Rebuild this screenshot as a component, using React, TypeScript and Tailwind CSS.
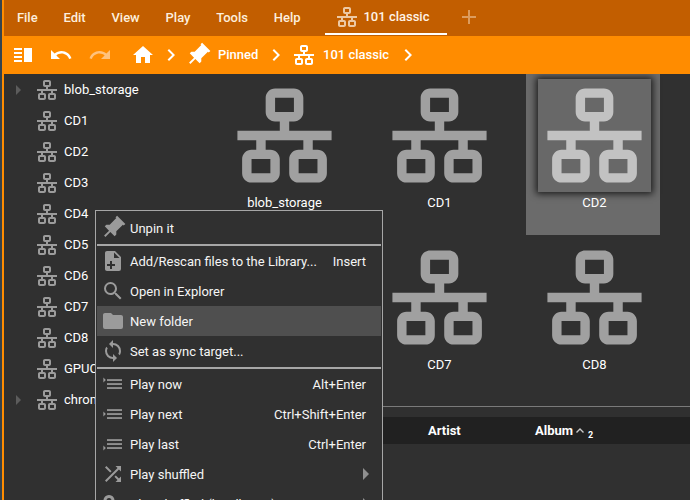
import React from 'react';

const LAN =
  'M10,2C8.89,2 8,2.89 8,4V7C8,8.11 8.89,9 10,9H11V11H2V13H6V15H5C3.89,15 3,15.89 3,17V20C3,21.11 3.89,22 5,22H9C10.11,22 11,21.11 11,20V17C11,15.89 10.11,15 9,15H8V13H16V15H15C13.89,15 13,15.89 13,17V20C13,21.11 13.89,22 15,22H19C20.11,22 21,21.11 21,20V17C21,15.89 20.11,15 19,15H18V13H22V11H13V9H14C15.11,9 16,8.11 16,7V4C16,2.89 15.11,2 14,2H10M10,4H14V7H10V4M5,17H9V20H5V17M15,17H19V20H15V17Z';
const HOME = 'M10,20V14H14V20H19V12H22L12,3L2,12H5V20H10Z';
const UNDO =
  'M12.5,8C9.85,8 7.45,9 5.6,10.6L2,7V16H11L7.38,12.38C8.77,11.22 10.54,10.5 12.5,10.5C16.04,10.5 19.05,12.81 20.1,16L22.47,15.22C21.08,11.03 17.15,8 12.5,8Z';
const REDO =
  'M18.4,10.6C16.55,9 14.15,8 11.5,8C6.85,8 2.92,11.03 1.54,15.22L3.9,16C4.95,12.81 7.95,10.5 11.5,10.5C13.45,10.5 15.23,11.22 16.62,12.38L13,16H22V7L18.4,10.6Z';
const CHEVRON = 'M8.59,16.58L13.17,12L8.59,7.41L10,6L16,12L10,18L8.59,16.58Z';
const PIN = 'M16,12V4H17V2H7V4H8V12L6,14V16H11.2V22H12.8V16H18V14L16,12Z';
const FILE_PLUS =
  'M13,9H18.5L13,3.5V9M6,2H14L20,8V20A2,2 0 0,1 18,22H6C4.89,22 4,21.1 4,20V4C4,2.89 4.89,2 6,2M11,15V12H9V15H6V17H9V20H11V17H14V15H11Z';
const MAGNIFY =
  'M9.5,3A6.5,6.5 0 0,1 16,9.5C16,11.11 15.41,12.59 14.44,13.73L14.71,14H15.5L20.5,19L19,20.5L14,15.5V14.71L13.73,14.44C12.59,15.41 11.11,16 9.5,16A6.5,6.5 0 0,1 3,9.5A6.5,6.5 0 0,1 9.5,3M9.5,5C7,5 5,7 5,9.5C5,12 7,14 9.5,14C12,14 14,12 14,9.5C14,7 12,5 9.5,5Z';
const FOLDER = 'M10,4H4C2.89,4 2,4.89 2,6V18A2,2 0 0,0 4,20H20A2,2 0 0,0 22,18V8C22,6.89 21.1,6 20,6H12L10,4Z';
const SYNC =
  'M12,18A6,6 0 0,1 6,12C6,11 6.25,10.03 6.7,9.2L5.24,7.74C4.46,8.97 4,10.43 4,12A8,8 0 0,0 12,20V23L16,19L12,15M12,4V1L8,5L12,9V6A6,6 0 0,1 18,12C18,13 17.75,13.97 17.3,14.8L18.76,16.26C19.54,15.03 20,13.57 20,12A8,8 0 0,0 12,4Z';
const SHUFFLE =
  'M14.83,13.41L13.42,14.82L16.55,17.95L14.5,20H20V14.5L17.96,16.54L14.83,13.41M14.5,4L16.54,6.04L4,18.59L5.41,20L17.96,7.46L20,9.5V4M10.59,9.17L5.41,4L4,5.41L9.17,10.58L10.59,9.17Z';
const RING = 'M8,3A5.5,5.5 0 1,1 7.99,3ZM8,6A2.5,2.5 0 1,0 8.01,6ZM9,13H11V22H9Z';

const Icon = ({ d, className }: { d: string; className: string }): JSX.Element => (
  <svg viewBox="0 0 24 24" className={`shrink-0 fill-current ${className}`}>
    <path d={d} fillRule="evenodd" />
  </svg>
);

const QueueIcon = ({ markerY }: { markerY: number }): JSX.Element => (
  <svg viewBox="0 0 24 24" className="h-6 w-6 shrink-0 fill-current text-[#9b9b9b]">
    <rect x="6" y="7.2" width="15" height="1.7" />
    <rect x="6" y="11.2" width="15" height="1.7" />
    <rect x="6" y="15.2" width="15" height="1.7" />
    <path d={`M2.4 ${markerY - 2.4}L4.8 ${markerY}L2.4 ${markerY + 2.4}Z`} />
  </svg>
);

const menuBar = ['File', 'Edit', 'View', 'Play', 'Tools', 'Help'];
const tree = ['blob_storage', 'CD1', 'CD2', 'CD3', 'CD4', 'CD5', 'CD6', 'CD7', 'CD8', 'GPUCache', 'chrome'];
const folders = ['blob_storage', 'CD1', 'CD2', 'CD6', 'CD7', 'CD8'];

const Divider = (): JSX.Element => <div className="mt-px h-[2px] bg-[#a6a6a6]" />;

interface MenuRowProps {
  label: string;
  icon: React.ReactNode;
  shortcut?: string;
  active?: boolean;
  submenu?: boolean;
}

const MenuRow = ({ label, icon, shortcut, active, submenu }: MenuRowProps): JSX.Element => (
  <div className={`flex h-[30px] items-center pl-1 pr-[15px] ${active ? 'bg-[#4f4f4f]' : ''}`}>
    {icon}
    <span className="ml-[5px] flex-1 whitespace-nowrap pt-px">{label}</span>
    {shortcut && <span className="whitespace-nowrap pt-px">{shortcut}</span>}
    {submenu && (
      <svg viewBox="0 0 6 12" className="-mr-[3px] h-3 w-[6px] fill-[#8f8f8f]">
        <path d="M0 0L6 6L0 12Z" />
      </svg>
    )}
  </div>
);

const App = (): JSX.Element => {
  const menuIcon = 'h-6 w-6 text-[#9b9b9b]';
  return (
    <div className="relative flex h-[500px] w-[690px] overflow-hidden bg-[#303030] font-['Roboto',sans-serif] text-[13px] text-white">
      <div className="w-1 shrink-0 border-l-2 border-[#34434f] bg-[#ff8c00]" />

      <div className="flex min-w-0 flex-1 flex-col">
        <div className="flex h-9 shrink-0 bg-[#c25e00] font-medium text-[#fdeedd]">
          {menuBar.map((item) => (
            <div key={item} className="flex h-[35px] items-center px-[12.9px]">
              {item}
            </div>
          ))}
          <div className="ml-[12px] flex h-[35px] items-center border-b-2 border-white pl-[10px] pr-[18px] text-[#fff3e6]">
            <Icon d={LAN} className="h-6 w-6 text-[#ecc9a5]" />
            <span className="ml-1">101 classic</span>
          </div>
          <svg viewBox="0 0 14 14" className="ml-[15px] mt-[10px] h-[14px] w-[14px] fill-[#dc9c5e]">
            <path d="M6 0H8V6H14V8H8V14H6V8H0V6H6Z" />
          </svg>
        </div>

        <div className="flex h-[38px] shrink-0 items-center bg-[#ff8c00] pl-[10px] font-medium text-white">
          <svg viewBox="0 0 18 14" className="h-[14px] w-[18px] shrink-0 fill-white">
            <path d="M0 0H8V2H0ZM0 4H8V6H0ZM0 8H8V10H0ZM0 12H8V14H0ZM10 0H18V14H10Z" />
          </svg>
          <Icon d={UNDO} className="ml-[17px] h-6 w-6" />
          <Icon d={REDO} className="ml-[15px] h-6 w-6 text-[#ffc27d]" />
          <Icon d={HOME} className="ml-[19px] h-6 w-6" />
          <Icon d={CHEVRON} className="ml-1 h-6 w-6" />
          <svg viewBox="0 0 24 24" className="ml-px mr-[-2px] h-7 w-7 shrink-0 rotate-45 fill-white">
            <path d={PIN} />
          </svg>
          <span className="ml-2 w-10 whitespace-nowrap">Pinned</span>
          <Icon d={CHEVRON} className="ml-[6px] h-6 w-6" />
          <Icon d={LAN} className="ml-1 h-6 w-6" />
          <span className="ml-[7px] w-[67px] whitespace-nowrap">101 classic</span>
          <Icon d={CHEVRON} className="ml-[6px] h-6 w-6" />
        </div>

        <div className="flex min-h-0 flex-1">
          <div className="w-[212px] shrink-0">
            {tree.map((name) => (
              <div key={name} className="flex h-[31px] items-center">
                <div className="flex w-[31px] shrink-0 justify-end pr-[14px]">
                  {(name === 'blob_storage' || name === 'chrome') && (
                    <svg viewBox="0 0 5 10" className="h-[10px] w-[5px] fill-[#5c5c5c]">
                      <path d="M0 0L5 5L0 10Z" />
                    </svg>
                  )}
                </div>
                <Icon d={LAN} className="h-6 w-6 text-[#9c9c9c]" />
                <span className="ml-[5px]">{name}</span>
              </div>
            ))}
          </div>

          <div className="flex min-w-0 flex-1 flex-col">
            <div className="grid h-[332px] shrink-0 grid-cols-[repeat(3,134px)] content-start gap-x-[21px] gap-y-px overflow-hidden">
              {folders.map((name) => {
                const selected = name === 'CD2';
                return (
                  <div key={name} className={`h-[161px] pl-3 pt-[5px] ${selected ? 'bg-[#6b6b6b]' : ''}`}>
                    <div
                      className={
                        selected
                          ? 'h-[113px] w-[113px] bg-[#686868] text-[#c2c2c2] shadow-[0_0_7px_2px_rgba(0,0,0,0.75)]'
                          : 'h-[113px] w-[113px] text-[#a0a0a0]'
                      }
                    >
                      <Icon d={LAN} className="h-[113px] w-[113px]" />
                    </div>
                    <div className="mt-[3px] h-4 w-[113px] text-center leading-4">{name}</div>
                  </div>
                );
              })}
            </div>
            <div className="h-px shrink-0 bg-[#7a7a7a]" />
            <div className="mt-[10px] flex h-[27px] shrink-0 items-center bg-[#212121] pl-[212px] font-bold">
              <span className="w-[107px]">Artist</span>
              <span>Album</span>
              <svg viewBox="0 0 8 5" className="ml-[3px] h-[5px] w-2 fill-none stroke-[#c8c8c8] stroke-[1.4]">
                <path d="M0.5 4.5L4 1L7.5 4.5" />
              </svg>
              <span className="ml-[4px] mt-[9px] text-[9px] leading-none">2</span>
            </div>
          </div>
        </div>
      </div>

      <div className="absolute left-[95px] top-[210px] h-[320px] w-[288px] border border-[#a6a6a6] bg-[#303030] p-px pt-[2px] text-[#f5f5f5]">
        <MenuRow
          label="Unpin it"
          icon={
            <svg viewBox="0 0 24 24" className="-mx-[2px] h-7 w-7 shrink-0 rotate-45 fill-[#9b9b9b]">
              <path d={PIN} />
            </svg>
          }
        />
        <Divider />
        <MenuRow label="Add/Rescan files to the Library..." shortcut="Insert" icon={<Icon d={FILE_PLUS} className={menuIcon} />} />
        <MenuRow label="Open in Explorer" icon={<Icon d={MAGNIFY} className={menuIcon} />} />
        <MenuRow label="New folder" active icon={<Icon d={FOLDER} className={menuIcon} />} />
        <MenuRow label="Set as sync target..." icon={<Icon d={SYNC} className={menuIcon} />} />
        <Divider />
        <MenuRow label="Play now" shortcut="Alt+Enter" icon={<QueueIcon markerY={8} />} />
        <MenuRow label="Play next" shortcut="Ctrl+Shift+Enter" icon={<QueueIcon markerY={12} />} />
        <MenuRow label="Play last" shortcut="Ctrl+Enter" icon={<QueueIcon markerY={16} />} />
        <MenuRow label="Play shuffled" submenu icon={<Icon d={SHUFFLE} className={menuIcon} />} />
        <MenuRow label="Play shuffled (by albums)" submenu icon={<Icon d={RING} className={menuIcon} />} />
      </div>
    </div>
  );
};

export default App;
